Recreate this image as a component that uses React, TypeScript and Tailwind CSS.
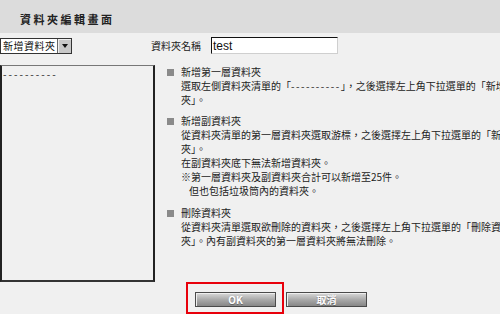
const cjk = { fontFamily: '"Noto Sans CJK TC", "Noto Sans CJK SC", sans-serif' };

function Section({ title, lines, className = '' }: { title: string; lines: React.ReactNode[]; className?: string }) {
  return (
    <div className={className}>
      <div className="flex items-center h-[14px]">
        <span className="w-[7px] h-[7px] bg-[#8a8a8a] shrink-0" />
        <span className="ml-[7px] text-[#222]">{title}</span>
      </div>
      {lines.map((l, i) => (
        <div key={i} className="h-[14px] pl-[14px] whitespace-nowrap text-[#222]">
          {l}
        </div>
      ))}
    </div>
  );
}

function Btn({ label }: { label: string }) {
  return (
    <div className="w-[81px] h-[15px] border border-[#4a4a4a] bg-gradient-to-b from-[#dadada] via-[#aaaaaa] to-[#878787] shadow-[inset_1px_1px_0_#eeeeee] flex items-center justify-center text-white text-[10px] font-bold leading-none [text-shadow:0_1px_0_#666]">
      {label}
    </div>
  );
}

export default function App() {
  return (
    <div className="w-[500px] h-[314px] overflow-hidden bg-[#f0f0f0] text-[10px] leading-[14px]" style={cjk}>
      {/* title bar */}
      <div className="h-[33px] bg-[#dcdcdc] flex items-center pl-[20px] pt-[5px]">
        <span className="text-[11px] font-bold tracking-[2.5px] text-[#222]">資料夾編輯畫面</span>
      </div>

      {/* toolbar */}
      <div className="mt-[4px] flex items-center h-[17px]">
        <div className="w-[72px] h-[16px] shrink-0 bg-white border border-[#333] flex items-center">
          <span className="pl-[2px] flex-1 tracking-[0.5px] text-[#111] leading-none">新增資料夾</span>
          <span className="w-[14px] h-full bg-[#c8c8c8] border-l border-[#666] shadow-[inset_1px_1px_0_#eee] flex items-center justify-center">
            <span className="w-0 h-0 border-l-[3px] border-r-[3px] border-t-[4px] border-l-transparent border-r-transparent border-t-[#111]" />
          </span>
        </div>
        <span className="ml-[79px] text-[#222]">資料夾名稱</span>
        <div className="ml-[10px] w-[127px] h-[17px] shrink-0 bg-white border border-t-[#111] border-l-[#111] border-r-[#cfcfcf] border-b-[#cfcfcf] flex items-center pl-[1px]">
          <span className="text-[12px] text-[#111] leading-none" style={{ fontFamily: '"Liberation Sans", Arial, sans-serif' }}>
            test
          </span>
        </div>
      </div>

      {/* content */}
      <div className="mt-[11px] flex">
        <div className="w-[155px] h-[217px] shrink-0 border-t border-t-[#777] border-l-2 border-r-2 border-b-2 border-l-[#222] border-r-[#222] border-b-[#333] pt-[1px] pl-[1px]">
          <span className="tracking-[2px] text-[#222]">----------</span>
        </div>
        <div className="ml-[12px] shrink-0">
          <Section
            title="新增第一層資料夾"
            lines={[
              <>選取左側資料夾清單的「<span className="tracking-[1.5px]">----------</span>」，之後選擇左上角下拉選單的「新增資料</>,
              '夾」。',
            ]}
          />
          <Section
            className="mt-[7px]"
            title="新增副資料夾"
            lines={[
              '從資料夾清單的第一層資料夾選取游標，之後選擇左上角下拉選單的「新增資料',
              '夾」。',
              '在副資料夾底下無法新增資料夾。',
              '※第一層資料夾及副資料夾合計可以新增至25件。',
              <span className="pl-[8px]">但也包括垃圾筒內的資料夾。</span>,
            ]}
          />
          <Section
            className="mt-[8px]"
            title="刪除資料夾"
            lines={[
              '從資料夾清單選取欲刪除的資料夾，之後選擇左上角下拉選單的「刪除資料',
              '夾」。內有副資料夾的第一層資料夾將無法刪除。',
            ]}
          />
        </div>
      </div>

      {/* buttons */}
      <div className="flex items-start pl-[186px]">
        <div className="w-[98px] h-[32px] shrink-0 border-2 border-[#e8000b] pl-[7px] pt-[8px]">
          <Btn label="OK" />
        </div>
        <div className="ml-[2px] mt-[10px]">
          <Btn label="取消" />
        </div>
      </div>
    </div>
  );
}
